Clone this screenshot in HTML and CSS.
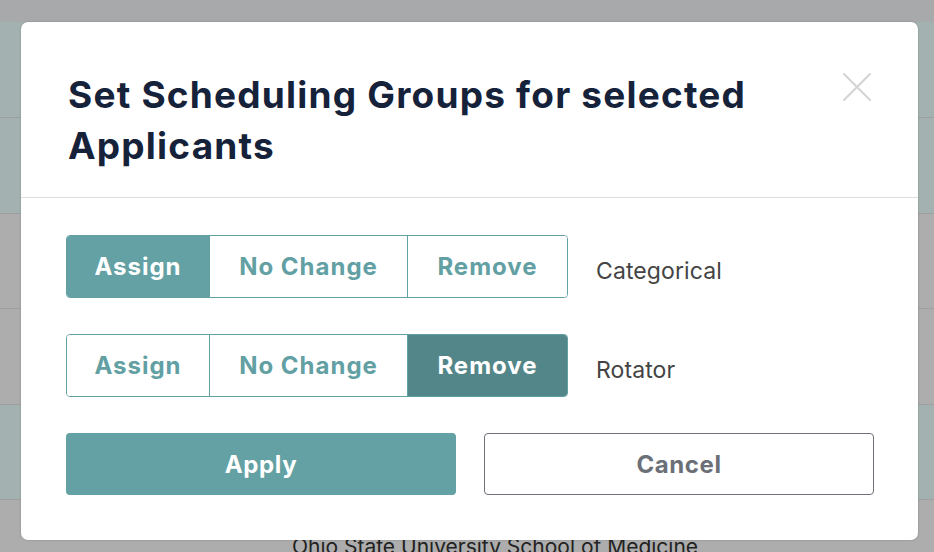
FILE: index.html
```html
<!DOCTYPE html>
<html>
<head>
<meta charset="utf-8">
<link rel="stylesheet" href="styles.css">
</head>
<body>
<div class="page">
  <div class="topbar"></div>
  <div class="row tint h96"></div>
  <div class="row tint h96"></div>
  <div class="row h95"></div>
  <div class="row h96"></div>
  <div class="row tint h95"></div>
  <div class="row last"><span class="school">Ohio State University School of Medicine</span></div>
</div>
<div class="modal">
  <div class="modal-header">
    <h1 class="title">Set Scheduling Groups for selected Applicants</h1>
    <button class="close" aria-label="Close">
      <svg width="30" height="30" viewBox="0 0 30 30"><path d="M2 2 L28 28 M28 2 L2 28" stroke="#d3d3d3" stroke-width="2" stroke-linecap="round" fill="none"/></svg>
    </button>
  </div>
  <div class="modal-body">
    <div class="group-row">
      <div class="seg">
        <span class="opt w1 active">Assign</span>
        <span class="opt w2">No Change</span>
        <span class="opt w3">Remove</span>
      </div>
      <span class="label">Categorical</span>
    </div>
    <div class="group-row">
      <div class="seg">
        <span class="opt w1">Assign</span>
        <span class="opt w2">No Change</span>
        <span class="opt w3 active dark">Remove</span>
      </div>
      <span class="label">Rotator</span>
    </div>
    <div class="actions">
      <button class="btn apply">Apply</button>
      <button class="btn cancel">Cancel</button>
    </div>
  </div>
</div>
</body>
</html>
```
FILE: styles.css
```css
html, body {
  margin: 0;
  padding: 0;
}
body {
  width: 934px;
  height: 552px;
  overflow: hidden;
  background: #adadad;
  font-family: Inter, "Liberation Sans", sans-serif;
  position: relative;
}
.page {
  display: flex;
  flex-direction: column;
  height: 552px;
  overflow: hidden;
}
.topbar {
  height: 22px;
  flex: none;
  background: #a8a9aa;
}
.row {
  flex: none;
  background: #adadad;
  border-bottom: 1px solid #9e9e9e;
  box-sizing: border-box;
}
.h96 { height: 96px; }
.h95 { height: 95px; }
.row.tint {
  background: #a3b2b0;
}
.row.last {
  border-bottom: none;
  display: flex;
  justify-content: center;
  padding-top: 34px;
  height: 60px;
}
.school {
  font-size: 21px;
  line-height: 26px;
  letter-spacing: 0;
  color: #222;
  margin-left: 56px;
}
.modal {
  position: absolute;
  left: 21px;
  top: 22px;
  width: 897px;
  height: 518px;
  background: #fff;
  border-radius: 7px;
  box-shadow: 0 0 2px rgba(0,0,0,0.25);
  box-sizing: border-box;
}
.modal-header {
  display: flex;
  justify-content: space-between;
  align-items: flex-start;
  padding: 47px 46px 26px 47px;
  border-bottom: 1px solid #dcdde0;
}
.title {
  margin: 0;
  font-size: 37px;
  line-height: 51px;
  font-weight: 700;
  letter-spacing: 1.2px;
  color: #15223a;
  width: 720px;
}
.close {
  background: none;
  border: none;
  padding: 0;
  margin-top: 3px;
  width: 30px;
  height: 30px;
}
.modal-body {
  padding: 37px 44px 0 45px;
}
.group-row {
  display: flex;
  align-items: center;
  margin-bottom: 36px;
}
.seg {
  display: flex;
  height: 63px;
  border: 1px solid #62a0a3;
  border-radius: 4px;
  overflow: hidden;
  box-sizing: border-box;
}
.opt {
  display: flex;
  align-items: center;
  justify-content: center;
  font-size: 24px;
  font-weight: 700;
  letter-spacing: 1px;
  color: #62a0a3;
  background: #fff;
  box-sizing: border-box;
}
.opt + .opt {
  border-left: 1px solid #62a0a3;
}
.w1 { width: 142px; }
.w2 { width: 198px; }
.w3 { width: 160px; }
.opt.active {
  background: #64a1a4;
  color: #fff;
}
.opt.dark {
  background: #528688;
}
.label {
  margin-left: 28px;
  font-size: 23px;
  letter-spacing: 0.1px;
  color: #444;
  padding-top: 8px;
}
.actions {
  display: flex;
  gap: 28px;
}
.btn {
  width: 390px;
  height: 62px;
  border-radius: 4px;
  font-family: Inter, "Liberation Sans", sans-serif;
  font-size: 24px;
  font-weight: 700;
  letter-spacing: 0.6px;
  box-sizing: border-box;
  padding: 0;
}
.apply {
  background: #63a1a4;
  border: none;
  color: #fff;
}
.cancel {
  background: #fff;
  border: 1px solid #6f747b;
  color: #6b7078;
}
```
